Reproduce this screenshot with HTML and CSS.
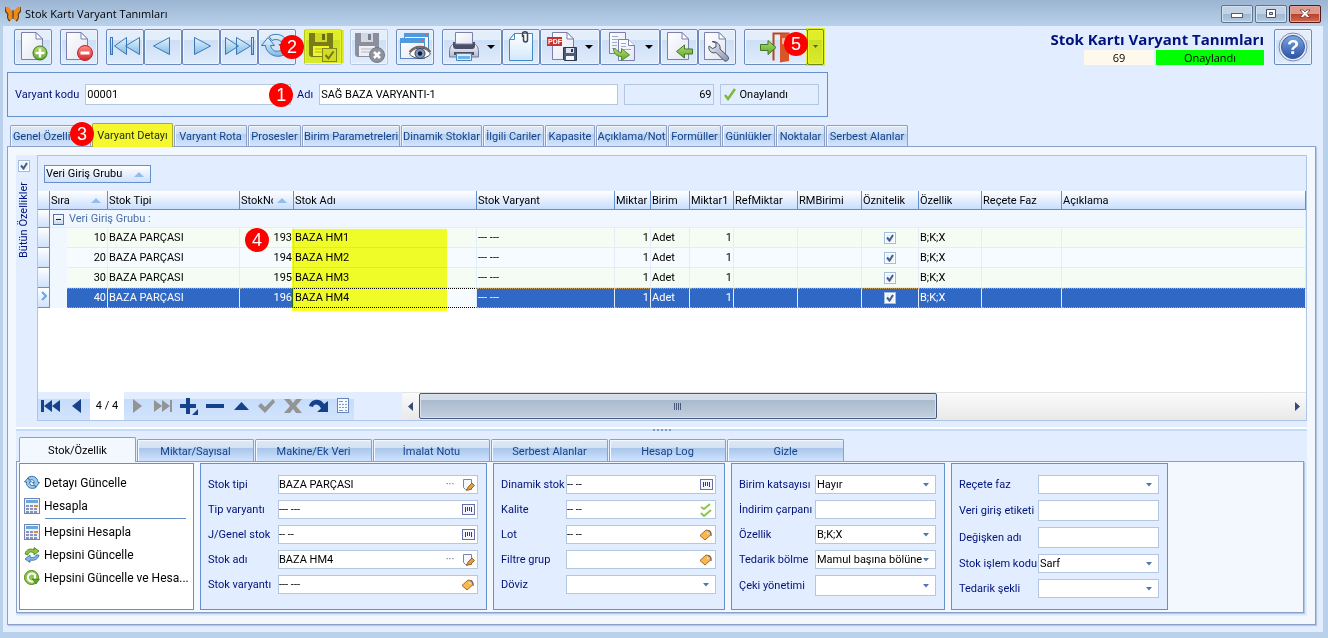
FILE: index.html
```html
<!DOCTYPE html>
<html lang="tr">
<head>
    <meta charset="UTF-8">
    <meta name="viewport" content="width=device-width, initial-scale=1.0">
    <title>Stok Kartı Varyant Tanımları</title>
    <link rel="stylesheet" href="styles.css">
</head>
<body>
    <!-- shared gradients and symbols -->
    <svg class="defs" width="0" height="0" aria-hidden="true">
        <defs>
            <linearGradient id="blue" x1="0" y1="0" x2="0" y2="1"><stop offset="0" stop-color="#e6f5fd"/><stop offset="1" stop-color="#7fbae6"/></linearGradient>
            <linearGradient id="paper" x1="0" y1="0" x2="1" y2="1"><stop offset="0" stop-color="#ffffff"/><stop offset="1" stop-color="#e3e6f2"/></linearGradient>
            <linearGradient id="sheet" x1="0" y1="0" x2="0" y2="1"><stop offset="0" stop-color="#ffffff"/><stop offset="1" stop-color="#d3e8fa"/></linearGradient>
            <linearGradient id="green" x1="0" y1="0" x2="0" y2="1"><stop offset="0" stop-color="#b5dc6c"/><stop offset="1" stop-color="#62a32c"/></linearGradient>
            <linearGradient id="red" x1="0" y1="0" x2="0" y2="1"><stop offset="0" stop-color="#ff8d86"/><stop offset="1" stop-color="#d42a2a"/></linearGradient>
            <linearGradient id="steel" x1="0" y1="0" x2="1" y2="1"><stop offset="0" stop-color="#eef0f8"/><stop offset="1" stop-color="#8990ad"/></linearGradient>
            <linearGradient id="body" x1="0" y1="0" x2="0" y2="1"><stop offset="0" stop-color="#f2f3f9"/><stop offset="1" stop-color="#b3b8cd"/></linearGradient>
            <linearGradient id="helpblue" x1="0" y1="0" x2="0" y2="1"><stop offset="0" stop-color="#7ba6e0"/><stop offset="1" stop-color="#2a54a8"/></linearGradient>
            <symbol id="page" viewBox="0 0 22 28"><path d="M.5.5H15l6.500 6.500V27.500H.5z" fill="url(#paper)" stroke="#7a7fae"/><path d="M15 .5V7h6.500z" fill="#fff" stroke="#7a7fae"/></symbol>
            <symbol id="barcode" viewBox="0 0 13 11"><rect x=".5" y=".5" width="12" height="10" fill="#f5f6fb" stroke="#6a6fa5"/><path d="M3.500 3v5M5.500 3v4M7.500 3v4M9.500 3v5" stroke="#3c3c55"/></symbol>
            <symbol id="edit" viewBox="0 0 13 14"><path d="M1.500 1.500h8v10h-6l-2-2z" fill="#f6f8fd" stroke="#7d83ad"/><path d="M4.500 12.500L6 9l4-4 2.500 2.500-4 4z" fill="#e39a3c" stroke="#8a5420" stroke-width=".8"/></symbol>
            <symbol id="tag" viewBox="0 0 14 12"><path d="M1 6.500L7 1l4 .8.8 4L6 11z" fill="#f7b84e" stroke="#a9672a"/><circle cx="9" cy="3.800" r="1" fill="#fff"/><path d="M9 3.500c2-3 4 1 3 3.500" fill="none" stroke="#5a5f80"/></symbol>
            <symbol id="checks" viewBox="0 0 12 14"><path d="M1 4l3 2 6-5M1 10l3 3 7-6" fill="none" stroke="#8cc84b" stroke-width="2"/></symbol>
            <symbol id="calc" viewBox="0 0 16 16"><rect x=".5" y=".5" width="15" height="15" fill="#eef2fa" stroke="#7384b4"/><path d="M2 2h12v3H2z" fill="#67a8df"/><path d="M2 7h3v2H2zM6 7h3v2H6zM2 10h3v2H2zM6 10h3v2H6zM10 10h3v2h-3zM2 13h3v2H2zM6 13h3v2H6zM10 13h3v2h-3z" fill="#8593bd"/><path d="M10 7h4v2h-4z" fill="#dd8b36"/></symbol>
        </defs>
    </svg>

    <header class="titlebar">
        <svg width="16" height="16" viewBox="0 0 16 16"><path d="M7.500 6C5 1 2 0 0 1c0 3 1 6 3 7-1 3 0 6 2 7 2-1 3-4 3-6 0 2 1 5 3 6 2-1 3-4 2-7 2-1 3-4 3-7-2-1-5 0-7.500 5z" fill="#f08a1c"/><path d="M8 4v9M0 1c0 3 1 6 3 7M16 1c0 3-1 6-3 7M5 15c-2-1-3-4-2-7M11 15c2-1 3-4 2-7" fill="none" stroke="#50391f" stroke-width="1.200"/></svg>
        <span class="caption">Stok Kartı Varyant Tanımları</span>
        <button class="winbtn" aria-label="Küçült"><svg width="12" height="12"><rect x=".5" y="5.500" width="11" height="4" fill="#fff" stroke="#555c6e"/></svg></button>
        <button class="winbtn" aria-label="Büyüt"><svg width="12" height="12"><path d="M1.500 1.500h9v8h-9z M4.500 4.500h3v2h-3z" fill="#fff" fill-rule="evenodd" stroke="#4a5064"/></svg></button>
        <button class="winbtn close" aria-label="Kapat"><svg width="12" height="12"><path d="M1 2h3l2 2 2-2h3L8 5.500 11 9.500H8l-2-2-2 2H1l3-4z" fill="#fff" stroke="#6b2020" stroke-width=".7"/></svg></button>
    </header>

    <main class="client">
        <div class="top">
            <div class="toolbar">
                <div class="group"><button class="tool" aria-label="Yeni"><svg width="32" height="32"><use href="#page" x="4" y="1" width="22" height="28"/><circle cx="23" cy="22" r="7" fill="url(#green)" stroke="#37761b"/><path d="M23 17.500v9M18.500 22h9" stroke="#fff" stroke-width="2.500"/></svg></button></div>
                <div class="group"><button class="tool" aria-label="Sil"><svg width="32" height="32"><use href="#page" x="3" y="1" width="22" height="28"/><circle cx="22" cy="22" r="7.500" fill="url(#red)" stroke="#c02228"/><path d="M17.500 22h9" stroke="#fff" stroke-width="3"/></svg></button></div>
                <div class="group">
                    <button class="tool" aria-label="İlk"><svg width="32" height="32" fill="url(#blue)" stroke="#3b77b5"><rect x="1.500" y="6.500" width="2" height="17"/><path d="M17.500 6.500v17L5.500 15zM30.500 6.500v17L16.500 15z"/></svg></button>
                    <button class="tool" aria-label="Önceki"><svg width="32" height="32" fill="url(#blue)" stroke="#3b77b5"><path d="M22.500 6.500v17L6.500 15z"/></svg></button>
                    <button class="tool" aria-label="Sonraki"><svg width="32" height="32" fill="url(#blue)" stroke="#3b77b5"><path d="M9.500 6.500v17L25.500 15z"/></svg></button>
                    <button class="tool" aria-label="Son"><svg width="32" height="32" fill="url(#blue)" stroke="#3b77b5"><path d="M2.500 6.500v17l13-8.500zM13.500 6.500v17L27.500 15z"/><rect x="28.500" y="6.500" width="2" height="17"/></svg></button>
                    <button class="tool" aria-label="Yenile"><svg width="32" height="32" fill="url(#blue)" stroke="#3b77b5"><path d="M.5 14.500L7 6.500l6.500 8h-4c1 4 4 6.500 8 5.500 2 0 4-1 5-2l3 4c-8 7-20 2-21-7.500z"/><path d="M8 5.500c7-5 18-1 19 8h4l-6.500 8-6.500-8h4c-2-5-7-6-11-4z"/></svg><span class="badge on-refresh">2</span></button>
                </div>
                <div class="group"><button class="tool disabled" aria-label="Kaydet ve onayla"><svg width="32" height="32"><path d="M2 2h24v24H4l-2-2z" fill="#7b7d8f"/><path d="M8 2h12v9H8z" fill="#d3d6e0"/><path d="M15 3h3v6h-3z" fill="#696c7e"/><path d="M6 15h16v10H6z" fill="#f6f6fa"/><path d="M8 18h12M8 21h12" stroke="#b2b5c2"/><rect x="15.500" y="17.500" width="14" height="13" fill="#d9dbe5" stroke="#85879a"/><path d="M18.500 24l3 3.500 5-7" fill="none" stroke="#73768a" stroke-width="2"/></svg><span class="marker over-save"></span></button></div>
                <div class="group"><button class="tool disabled" aria-label="Vazgeç"><svg width="32" height="32"><path d="M2 2h24v24H4l-2-2z" fill="#8b8f9d"/><path d="M8 2h12v9H8z" fill="#d3d7e0"/><path d="M15 3h3v6h-3z" fill="#7b7f8d"/><path d="M6 15h16v10H6z" fill="#eef0f4"/><path d="M8 18h12M8 21h12" stroke="#b2b6c2"/><circle cx="24" cy="24" r="7.500" fill="#8e929e" stroke="#777b88"/><path d="M21 21l6 6M27 21l-6 6" stroke="#fff" stroke-width="2.500"/></svg></button></div>
                <div class="group"><button class="tool" aria-label="Önizleme"><svg width="32" height="32"><rect x="5.500" y="2.500" width="24" height="18" fill="#f4f7fd" stroke="#4a86c8"/><path d="M5 2h25v4H5z" fill="#4f9ade"/><rect x="1.500" y="7.500" width="24" height="20" fill="url(#paper)" stroke="#5e86ba"/><path d="M1 7h25v5H1z" fill="#4f9ade"/><path d="M22 8h3v3h-3zM26 3h3v2h-3z" fill="#e8605a"/><path d="M10.500 23c5-8 16-8 21 0-5 6-16 6-21 0z" fill="#fff" stroke="#4c4a55"/><path d="M10.500 21c5-7 16-7 21 0" fill="none" stroke="#76685f" stroke-width="2"/><circle cx="21" cy="22.500" r="5" fill="#7a97bd" stroke="#30415f"/><circle cx="21" cy="22.500" r="2.200" fill="#111a2c"/></svg></button></div>
                <div class="group">
                    <button class="tool wide" aria-label="Yazdır"><svg width="32" height="32"><path d="M5 13.500C3 14 1.500 17 1.500 21v5h29v-5c0-4-1.500-7-3.500-7.500z" fill="url(#body)" stroke="#73789e"/><path d="M5 11h22v3c0 3-1 4-3 4H8c-2 0-3-1-3-4z" fill="#4a4f66"/><path d="M7.500 1.500h17V13h-17z" fill="url(#paper)" stroke="#7c81aa"/><path d="M6 21h20v3H6z" fill="#4a4f66"/><path d="M8.500 22.500h15v7h-15z" fill="#d7ecfb" stroke="#4988bf"/><path d="M10 25h12v3H10z" fill="#6fb4e6"/></svg><svg class="drop" width="9" height="5"><path d="M0 0h8L4 4z"/></svg></button>
                    <button class="tool" aria-label="Ekler"><svg width="32" height="32"><path d="M9.500 2.500h18v27h-23v-21z" fill="url(#sheet)" stroke="#4289c8"/><path d="M9.500 2.500v6h-5z" fill="#fff" stroke="#4289c8"/><path d="M18.500 4v5c0 2.500 4 2.500 4 0V3c0-3-5-3-5 0v3" fill="none" stroke="#3e455c" stroke-width="1.500"/></svg></button>
                    <button class="tool wide" aria-label="PDF kaydet"><svg width="32" height="32"><use href="#page" x="6" y="1" width="22" height="28"/><path d="M1 6h15v9H1z" fill="#c9302f"/><text x="2" y="13" class="pdf">PDF</text><path d="M17.500 16.500h13v13h-12l-1-1z" fill="#4d5a7b" stroke="#2f3750"/><path d="M20 17h8v5h-8z" fill="#dfe3ee"/><path d="M25 18h2v3h-2z" fill="#2f3750"/><path d="M20 25h8v4h-8z" fill="#f5f7fc"/></svg><svg class="drop" width="9" height="5"><path d="M0 0h8L4 4z"/></svg></button>
                    <button class="tool wide" aria-label="Kopyala"><svg width="32" height="32"><path d="M3.500 1.500h16v21h-16z" fill="url(#paper)" stroke="#7a7fae"/><path d="M6 5.500h6M6 8.500h6M6 11.500h5M6 14.500h5M6 17.500h4" stroke="#9da8cc"/><path d="M12.500 8.500h10l6 6v15h-16z" fill="url(#paper)" stroke="#7a7fae"/><path d="M22.500 8.500v6h6" fill="#fff" stroke="#7a7fae"/><path d="M15 12.500h5M15 15.500h5M15 18.500h10" stroke="#9da8cc"/><path d="M7.500 17.500c3 0 4 4 8 4v-4l8 6.500-8 5.500v-4c-5 0-8-3-8-8z" fill="url(#green)" stroke="#4d8c2a"/></svg><svg class="drop" width="9" height="5"><path d="M0 0h8L4 4z"/></svg></button>
                    <button class="tool" aria-label="İçe al"><svg width="32" height="32"><use href="#page" x="4" y="1" width="22" height="28"/><path d="M13.500 20.500l8-6.500v4h8v5h-8v4z" fill="url(#green)" stroke="#3d7a22"/></svg></button>
                    <button class="tool" aria-label="Ayarlar"><svg width="32" height="32"><use href="#page" x="3" y="1" width="22" height="28"/><path d="M11 10.500l4 1.500v4l-3.500 1.500L8 15c-1 5 3 8 7 6.500l8 8c2 2 6-1 4-4l-8-7.500c1-4-3-8-8-7.500z" fill="url(#steel)" stroke="#494f68"/></svg></button>
                </div>
                <div class="group"><button class="tool exit" aria-label="Çıkış"><svg width="32" height="32"><path d="M13.500 29.500v-27h16" fill="none" stroke="#bd431f" stroke-width="2"/><path d="M20 3l9-1v28l-9 1.500z" fill="#d9562b"/><path d="M22 7h5v6h-5z" fill="#f5b49a"/><path d="M.5 13.500H8V9.500l8 7-8 7v-4H.5z" fill="url(#green)" stroke="#3d7a22"/></svg></button><button class="tool split" aria-label="Çıkış seçenekleri"><svg width="6" height="4"><path d="M0 0h5L2.500 3z" fill="#4b6fa5"/></svg><span class="marker over-split"></span><span class="badge on-exit">5</span></button></div>
            </div>
            <div class="status">
                <h1>Stok Kartı Varyant Tanımları</h1>
                <div class="status-row"><span class="code">69</span><span class="approved">Onaylandı</span></div>
            </div>
            <button class="tool help" aria-label="Yardım"><svg width="32" height="32"><circle cx="16" cy="16" r="14" fill="#e7eaf5" stroke="#8189ad"/><circle cx="16" cy="16" r="11.500" fill="url(#helpblue)" stroke="#3a5c9e"/><text x="16" y="23" class="qmark">?</text></svg></button>
        </div>

        <div class="key-panel">
            <label for="kod">Varyant kodu</label>
            <input id="kod" class="kod" type="text" value="00001">
            <label for="ad" class="ad-label">Adı<span class="badge on-name">1</span></label>
            <input id="ad" class="ad" type="text" value="SAĞ BAZA VARYANTI-1">
            <input class="no" type="text" value="69" aria-label="No" readonly>
            <div class="state"><svg width="12" height="13"><path d="M1 7l3 4 7-10" fill="none" stroke="#7fb83e" stroke-width="2.500"/></svg>Onaylandı</div>
        </div>

        <nav class="tabs">
            <button>Genel Özellikler</button>
            <button class="active"><span class="badge on-tab">3</span>Varyant Detayı</button>
            <button>Varyant Rota</button>
            <button>Prosesler</button>
            <button>Birim Parametreleri</button>
            <button>Dinamik Stoklar</button>
            <button>İlgili Cariler</button>
            <button>Kapasite</button>
            <button>Açıklama/Not</button>
            <button>Formüller</button>
            <button>Günlükler</button>
            <button>Noktalar</button>
            <button>Serbest Alanlar</button>
        </nav>

        <section class="page">
            <div class="upper">
                <div class="side">
                    <input type="checkbox" id="tumu" checked>
                    <label for="tumu">Bütün Özellikler</label>
                </div>
                <div class="grid">
                    <div class="group-panel"><button class="chip">Veri Giriş Grubu <i class="sort"></i></button></div>
                    <table>
                        <colgroup>
                            <col class="c-ind"><col class="c-indent"><col class="c-sira"><col class="c-tip"><col class="c-no"><col class="c-ad"><col class="c-var"><col class="c-mik"><col class="c-bir"><col class="c-mik1"><col class="c-ref"><col class="c-ref"><col class="c-ozn"><col class="c-ozel"><col class="c-faz"><col>
                        </colgroup>
                        <thead>
                            <tr><th></th><th colspan="2">Sıra<i class="sort"></i></th><th>Stok Tipi</th><th><span class="cut">StokNo</span><i class="sort"></i></th><th>Stok Adı</th><th>Stok Varyant</th><th>Miktar</th><th>Birim</th><th>Miktar1</th><th>RefMiktar</th><th>RMBirimi</th><th>Öznitelik</th><th>Özellik</th><th>Reçete Faz</th><th>Açıklama</th></tr>
                        </thead>
                        <tbody>
                            <tr class="group-row"><td class="ind"></td><td colspan="15"><button class="collapse" aria-label="Daralt"></button>Veri Giriş Grubu :</td></tr>
                            <tr class="odd"><td class="ind"></td><td class="indent"></td><td class="num">10</td><td>BAZA PARÇASI</td><td class="num mark"><span class="badge on-row">4</span>193</td><td class="mark">BAZA HM1<span class="marker over-names"></span></td><td>--- ---</td><td class="num">1</td><td>Adet</td><td class="num">1</td><td></td><td></td><td class="chk"><input type="checkbox" aria-label="Öznitelik 10" checked></td><td>B;K;X</td><td></td><td></td></tr>
                            <tr><td class="ind"></td><td class="indent"></td><td class="num">20</td><td>BAZA PARÇASI</td><td class="num">194</td><td>BAZA HM2</td><td>--- ---</td><td class="num">1</td><td>Adet</td><td class="num">1</td><td></td><td></td><td class="chk"><input type="checkbox" aria-label="Öznitelik 20" checked></td><td>B;K;X</td><td></td><td></td></tr>
                            <tr class="odd"><td class="ind"></td><td class="indent"></td><td class="num">30</td><td>BAZA PARÇASI</td><td class="num">195</td><td>BAZA HM3</td><td>--- ---</td><td class="num">1</td><td>Adet</td><td class="num">1</td><td></td><td></td><td class="chk"><input type="checkbox" aria-label="Öznitelik 30" checked></td><td>B;K;X</td><td></td><td></td></tr>
                            <tr class="selected"><td class="ind"><svg width="6" height="10"><path d="M1 1l4 4-4 4" fill="none" stroke="#6aa5e6" stroke-width="2"/></svg></td><td class="indent"></td><td class="num">40</td><td>BAZA PARÇASI</td><td class="num">196</td><td class="focused">BAZA HM4</td><td>--- ---</td><td class="num">1</td><td>Adet</td><td class="num">1</td><td></td><td></td><td class="chk"><input type="checkbox" aria-label="Öznitelik 40" checked></td><td>B;K;X</td><td></td><td></td></tr>
                        </tbody>
                    </table>
                    <div class="grid-foot">
                        <div class="navigator">
                            <button aria-label="İlk kayıt"><svg width="20" height="14"><path d="M0 1h3v12H0zM11 1v12L3 7zM19 1v12l-8-6z"/></svg></button>
                            <button aria-label="Önceki kayıt"><svg width="20" height="14"><path d="M14 0v14L5 7z"/></svg></button>
                            <span class="pos">4 / 4</span>
                            <button class="off" aria-label="Sonraki kayıt"><svg width="20" height="14"><path d="M6 0v14l9-7z"/></svg></button>
                            <button class="off" aria-label="Son kayıt"><svg width="20" height="14"><path d="M1 1v12l8-6zM9 1v12l8-6zM17 1h2v12h-2z"/></svg></button>
                            <button aria-label="Ekle"><svg width="20" height="18"><path d="M7 1h4v6h6v4h-6v6H7v-6H1V7h6zM19 12v6h-6z"/></svg></button>
                            <button aria-label="Çıkar"><svg width="20" height="14"><path d="M1 5h18v4H1z"/></svg></button>
                            <button aria-label="Düzenle"><svg width="20" height="14"><path d="M3 11h15L10.500 3z"/></svg></button>
                            <button class="off" aria-label="Onayla"><svg width="20" height="14"><path d="M1 7l3-3 4 4L16 0l2 3L8 14z"/></svg></button>
                            <button class="off" aria-label="İptal"><svg width="20" height="14"><path d="M1 0h6l3 4 3-4h6l-6 7 6 7h-6l-3-4-3 4H1l6-7z"/></svg></button>
                            <button aria-label="Tazele"><svg width="20" height="14"><path d="M0 7C2-1 12-1 15 5l4-3v11H8l4-3.500C10 5 5 4 4 8z"/></svg></button>
                            <button class="last" aria-label="Liste"><svg width="12" height="16"><rect x=".5" y=".5" width="11" height="14" fill="#f4f8ff" stroke="#6684b8"/><path d="M2 3.500h4M8 3.500h2M2 6.500h2M5 6.500h2M8 6.500h2M2 9.500h2M5 9.500h2M8 9.500h2M2 12.500h4M8 12.500h2" stroke="#7d99c9"/></svg></button>
                        </div>
                        <div class="scroll">
                            <button aria-label="Sola kaydır"><svg width="6" height="10"><path d="M5 0v9L0 4.500z" fill="#394a72"/></svg></button>
                            <div class="track"><div class="thumb"><i></i><i></i><i></i><i></i></div></div>
                            <button aria-label="Sağa kaydır"><svg width="6" height="10"><path d="M0 0v9l5-4.500z" fill="#394a72"/></svg></button>
                        </div>
                    </div>
                </div>
            </div>

            <div class="splitter"><i></i><i></i><i></i><i></i><i></i></div>

            <div class="detail">
                <nav class="detail-tabs">
                    <button class="active">Stok/Özellik</button>
                    <button>Miktar/Sayısal</button>
                    <button>Makine/Ek Veri</button>
                    <button>İmalat Notu</button>
                    <button>Serbest Alanlar</button>
                    <button>Hesap Log</button>
                    <button>Gizle</button>
                </nav>
                <div class="detail-page">
                    <div class="box actions">
                        <a href="#"><svg width="16" height="16" fill="#9cc9ee" stroke="#3c73a8"><path d="M.5 7L4 3l3.500 4H5.500c0 3 2 4 5 3.500l1.500 2C7 15 2 12 2.500 7z"/><path d="M4 2.500c5-3 10 0 10 5h1.500L12 12 8.500 7.500h2c-1-3-3-3-5-2.500z"/></svg>Detayı Güncelle</a>
                        <a href="#"><svg width="16" height="16"><use href="#calc"/></svg>Hesapla</a>
                        <hr>
                        <a href="#"><svg width="16" height="16"><use href="#calc"/></svg>Hepsini Hesapla</a>
                        <a href="#"><svg width="16" height="16"><path d="M1 7c1-5 6-6 9-4V.5L15 4l-5 4V6C7 4 4 5 4 8z" fill="#8cc63f" stroke="#437a1e" stroke-width=".8"/><path d="M15 8c-1 5-6 6-9 5v2.500L1 12l5-4v2c3 1 6 0 6-2z" fill="#7fb7e8" stroke="#34699c" stroke-width=".8"/></svg>Hepsini Güncelle</a>
                        <a href="#"><svg width="16" height="16"><circle cx="7.500" cy="7.500" r="7" fill="#93c94a" stroke="#4b8423"/><path d="M11 10a4 4 0 1 1 0-5v4" fill="none" stroke="#fff" stroke-width="2"/><path d="M8 9h7.500L12 14z" fill="#5ea428" stroke="#35701a" stroke-width=".6"/></svg>Hepsini Güncelle ve Hesa...</a>
                    </div>

                    <div class="box form f-stok">
                        <label for="tip">Stok tipi</label>
                        <div class="field"><input id="tip" type="text" value="BAZA PARÇASI"><button class="dots" aria-label="Seç">···</button><button aria-label="Düzenle"><svg width="13" height="14"><use href="#edit"/></svg></button></div>
                        <label for="tipv">Tip varyantı</label>
                        <div class="field"><input id="tipv" type="text" value="--- ---"><button aria-label="Seç"><svg width="13" height="11"><use href="#barcode"/></svg></button></div>
                        <label for="genel">J/Genel stok</label>
                        <div class="field"><input id="genel" type="text" value="-- --"><button aria-label="Seç"><svg width="13" height="11"><use href="#barcode"/></svg></button></div>
                        <label for="sadi">Stok adı</label>
                        <div class="field"><input id="sadi" type="text" value="BAZA HM4"><button class="dots" aria-label="Seç">···</button><button aria-label="Düzenle"><svg width="13" height="14"><use href="#edit"/></svg></button></div>
                        <label for="svar">Stok varyantı</label>
                        <div class="field"><input id="svar" type="text" value="--- ---"><button aria-label="Seç"><svg width="14" height="12"><use href="#tag"/></svg></button></div>
                    </div>

                    <div class="box form f-dinamik">
                        <label for="din">Dinamik stok</label>
                        <div class="field"><input id="din" type="text" value="-- --"><button aria-label="Seç"><svg width="13" height="11"><use href="#barcode"/></svg></button></div>
                        <label for="kal">Kalite</label>
                        <div class="field"><input id="kal" type="text" value="-- --"><button aria-label="Seç"><svg width="12" height="14"><use href="#checks"/></svg></button></div>
                        <label for="lot">Lot</label>
                        <div class="field"><input id="lot" type="text" value="-- --"><button aria-label="Seç"><svg width="14" height="12"><use href="#tag"/></svg></button></div>
                        <label for="filtre">Filtre grup</label>
                        <div class="field"><input id="filtre" type="text"><button aria-label="Seç"><svg width="14" height="12"><use href="#tag"/></svg></button></div>
                        <label for="doviz">Döviz</label>
                        <select id="doviz"><option></option></select>
                    </div>

                    <div class="box form f-birim">
                        <label for="kats">Birim katsayısı</label>
                        <select id="kats"><option>Hayır</option></select>
                        <label for="ind">İndirim çarpanı</label>
                        <input id="ind" type="text">
                        <label for="ozel">Özellik</label>
                        <select id="ozel"><option>B;K;X</option></select>
                        <label for="ted">Tedarik bölme</label>
                        <select id="ted"><option>Mamul başına bölüne</option></select>
                        <label for="ceki">Çeki yönetimi</label>
                        <select id="ceki" class="tall"><option></option></select>
                    </div>

                    <div class="box form f-recete">
                        <label for="faz">Reçete faz</label>
                        <select id="faz"><option></option></select>
                        <label for="etiket">Veri giriş etiketi</label>
                        <input id="etiket" class="tall" type="text">
                        <label for="deg">Değişken adı</label>
                        <input id="deg" class="tall" type="text">
                        <label for="islem">Stok işlem kodu</label>
                        <select id="islem"><option>Sarf</option></select>
                        <label for="sekil">Tedarik şekli</label>
                        <select id="sekil"><option></option></select>
                    </div>
                </div>
            </div>
        </section>
    </main>
</body>
</html>
```
FILE: styles.css
```css
* {
    box-sizing: border-box;
}
body {
    margin: 0;
    min-height: 100vh;
    display: flex;
    flex-direction: column;
    background: #b9d1ea;
    font-family: Roboto, sans-serif;
    font-size: 11px;
    line-height: 14px;
    color: #000;
}
button, input, select {
    font: inherit;
    color: inherit;
    margin: 0;
    padding: 0;
}
button {
    border: none;
    background: none;
}
svg {
    flex-shrink: 0;
}
.defs {
    position: absolute;
}

/* title bar */
.titlebar {
    display: flex;
    align-items: center;
    gap: 2px;
    height: 26px;
    padding: 2px 7px 0 5px;
    background: linear-gradient(#9ab4d2, #b9d1ea);
}
.caption {
    flex: 1;
    padding-left: 2px;
    font-family: "Open Sans", sans-serif;
}
.winbtn {
    display: grid;
    place-items: center;
    width: 32px;
    height: 18px;
    border: 1px solid #5d7491;
    border-radius: 2px;
    box-shadow: inset 0 0 0 1px #d5e2f0;
    background: linear-gradient(#c3d3e6 50%, #9fb7d2 50%, #b5cbe2);
}
.winbtn.close {
    border-color: #56171c;
    box-shadow: inset 0 0 0 1px #e2a79c;
    background: linear-gradient(#dd9a8c 50%, #b8412c 50%, #cf6a50);
}

.client {
    flex: 1;
    display: flex;
    flex-direction: column;
    margin: 0 5px 6px 3px;
    padding: 3px 7px 7px 4px;
    background: #e2eeff;
}

/* toolbar */
.top {
    display: flex;
    padding: 0 4px 7px 7px;
}
.toolbar {
    display: flex;
    gap: 8px;
    flex: 1;
}
.group {
    display: flex;
}
.tool {
    position: relative;
    display: flex;
    align-items: center;
    justify-content: center;
    width: 38px;
    height: 36px;
    border: 1px solid #6b8cba;
    border-radius: 2px;
    box-shadow: inset 0 0 0 1px #eef5ff;
    background: linear-gradient(#e4eefb 30%, #cddff5 30%, #e0ecfc);
}
.tool.wide {
    width: 60px;
    gap: 7px;
}
.tool.disabled {
    border-color: #b5c8e2;
}
.tool.exit {
    width: 64px;
}
.tool.split {
    width: 17px;
    margin-left: -1px;
}
.pdf {
    font: bold 7px "Liberation Sans", sans-serif;
    fill: #fff;
}
.qmark {
    font: bold 20px "Liberation Sans", sans-serif;
    fill: #fff;
    text-anchor: middle;
}
.status {
    width: 214px;
    margin-right: 10px;
    text-align: right;
    font-family: "Open Sans", sans-serif;
}
.status h1 {
    margin: 0;
    font-size: 15px;
    line-height: 21px;
    color: #00137c;
    white-space: nowrap;
}
.status-row {
    display: flex;
    justify-content: flex-end;
    gap: 2px;
    text-align: center;
    line-height: 15px;
}
.status-row .code {
    width: 70px;
    background: #fff9ec;
}
.status-row .approved {
    width: 108px;
    background: #00ff00;
}

/* numbered badges and highlighter marks */
.badge {
    position: absolute;
    z-index: 2;
    width: 24px;
    height: 24px;
    border-radius: 50%;
    background: #fd0000;
    color: #fff;
    font: 18px/24px "Liberation Sans", sans-serif;
    text-align: center;
}
.on-refresh { left: 21px; top: 5px; }
.on-exit { left: -24px; top: 2px; }
.on-name { right: 20px; top: -5px; }
.on-tab { left: -23px; top: -2px; }
.on-row { left: 5px; top: 0; }
.marker {
    position: absolute;
    z-index: 1;
    background: #faff28;
    mix-blend-mode: multiply;
}
.over-save { inset: 0 -3px 1px -1px; }
.over-split { inset: -2px -2px -2px -2px; }
.over-names { left: -2px; top: 1px; width: 155px; height: 82px; }

/* key fields */
.key-panel {
    display: flex;
    align-items: center;
    align-self: flex-start;
    width: 821px;
    height: 45px;
    padding: 0 8px 0 7px;
    border: 1px solid #6590cb;
    color: #00117a;
    gap: 6px;
}
.key-panel input, .state {
    height: 21px;
    padding: 0 1px;
    border: 1px solid #b3c7e3;
    background: #fff;
    color: #000;
}
.key-panel label {
    position: relative;
    white-space: nowrap;
    flex: 1;
}
.key-panel .ad-label {
    flex: none;
}
.key-panel .kod { width: 207px; }
.key-panel .ad { width: 300px; }
.key-panel .no {
    width: 90px;
    text-align: right;
    background: #e2eeff;
}
.state {
    display: flex;
    align-items: center;
    gap: 4px;
    width: 100px;
}
.key-panel .state {
    padding-left: 3px;
    background: #e2eeff;
}

/* main tabs */
.tabs {
    display: grid;
    grid-template-columns: 82px 82px 74px 54px 99px 82px 62px 51px 72px 54px 54px 50px 83px;
    align-items: end;
    height: 29px;
    padding-left: 3px;
}
.tabs button {
    height: 21px;
    border: 1px solid #8c9fc8;
    border-bottom: none;
    border-radius: 2px 2px 0 0;
    box-shadow: inset 1px 1px 0 #f4f8ff;
    margin-right: 1px;
    padding-top: 2px;
    background: linear-gradient(#e0e9f5, #d3e1f3 40%, #b4ceef 40%, #d2e5ff);
    color: #15428b;
    white-space: nowrap;
}
.tabs button.active {
    position: relative;
    height: 24px;
    margin-bottom: -1px;
    background: #f5f72f;
    border-color: #a9ab2c;
    box-shadow: none;
    padding: 0;
    color: #1f2b10;
}

.page {
    flex: 1;
    display: flex;
    flex-direction: column;
    padding: 8px;
    border: 1px solid #8c9fc8;
    box-shadow: 1px 1px 1px #b5c6e2;
    background: #f3f8ff;
}
.upper {
    flex: 1;
    display: flex;
}
.side {
    display: flex;
    flex-direction: column;
    align-items: center;
    gap: 10px;
    width: 21px;
    padding: 5px 6px 0 0;
    background: #e2eeff;
    color: #00117a;
}
.side label {
    writing-mode: vertical-rl;
    transform: rotate(180deg);
    white-space: nowrap;
}
input[type="checkbox"] {
    appearance: none;
    display: block;
    width: 12px;
    height: 12px;
    border: 1px solid #a4bcdb;
    background: #eef3fa;
    box-shadow: inset 0 0 0 1px #fff;
}
input[type="checkbox"]:checked {
    background: #eef3fa url("data:image/svg+xml,%3Csvg xmlns='http://www.w3.org/2000/svg' width='10' height='10'%3E%3Cpath d='M2 4.500L4.500 7.500L8 2' fill='none' stroke='%233f618f' stroke-width='2'/%3E%3C/svg%3E");
}

/* grid */
.grid {
    flex: 1;
    min-width: 0;
    display: flex;
    flex-direction: column;
    border: 1px solid #b0c4e4;
    background: #fff;
}
.group-panel {
    height: 35px;
    padding: 9px 6px 0;
    background: #e2eeff;
}
.chip {
    display: flex;
    align-items: center;
    justify-content: space-between;
    width: 107px;
    height: 18px;
    padding: 0 6px 0 1px;
    border: 1px solid #6590cb;
    background: linear-gradient(#fff, #cfe1fb);
}
.sort {
    border: 5px solid transparent;
    border-top: none;
    border-bottom-color: #92bdf0;
}
table {
    width: 100%;
    table-layout: fixed;
    border-collapse: separate;
    border-spacing: 0;
}
.c-ind { width: 12px; }
.c-indent { width: 17px; }
.c-sira { width: 41px; }
.c-tip { width: 132px; }
.c-no { width: 54px; }
.c-ad { width: 183px; }
.c-var { width: 138px; }
.c-mik { width: 36px; }
.c-bir { width: 39px; }
.c-mik1 { width: 44px; }
.c-ref { width: 64px; }
.c-ozn { width: 57px; }
.c-ozel { width: 63px; }
.c-faz { width: 80px; }
th, td {
    padding: 1px 1px 0;
    white-space: nowrap;
    text-align: left;
    font-weight: normal;
    border-right: 1px solid #e2edfb;
    border-bottom: 1px solid #e2edfb;
}
th {
    height: 19px;
    overflow: hidden;
    border-color: #6590cb;
    background: linear-gradient(#fff, #c8defd);
}
th .sort {
    float: right;
    margin: 4px 5px 0 0;
}
th .cut {
    display: inline-block;
    width: 32px;
    overflow: hidden;
    vertical-align: top;
}
td {
    height: 20px;
    background: #f5fbff;
}
.odd td { background: #f4fcf4; }
.group-row td {
    height: 18px;
    background: #f0f7ff;
    color: #4a6fa8;
}
td.num { text-align: right; }
td.mark { position: relative; }
td.chk { padding-left: 22px; }
td.ind {
    padding: 0 3px;
    border-color: #6590cb;
    background: linear-gradient(#fff, #cfe1fb);
}
td.indent {
    border: none;
    background: #f0f7ff;
}
.selected td {
    padding-top: 0;
    background: #2f69c5;
    color: #fff;
    border-top: 1px dotted #c79f5a;
    border-bottom: 1px dotted #c79f5a;
}
.selected td.ind {
    border-top: none;
    border-bottom: 1px solid #6590cb;
    background: linear-gradient(#fff, #cfe1fb);
}
.selected td.indent {
    border: none;
    background: #f0f7ff;
}
.selected td.focused {
    background: #f5fbff;
    color: #000;
    border-top-color: #000;
    border-bottom-color: #000;
}
.collapse {
    display: inline-grid;
    place-items: center;
    width: 11px;
    height: 11px;
    margin: 0 5px 0 2px;
    vertical-align: middle;
    border: 1px solid #5673a5;
    background: linear-gradient(#fff, #cbd9ee);
}
.collapse::before {
    content: "";
    width: 5px;
    height: 1px;
    background: #222;
}

/* navigator and scroll bar */
.grid-foot {
    display: flex;
    height: 28px;
    margin-top: auto;
    background: #e2eeff;
}
.navigator {
    display: flex;
    width: 364px;
    fill: #15428b;
}
.navigator button {
    display: grid;
    place-items: center;
    width: 26px;
    background: linear-gradient(#e2eeff 25%, #c5dcfb 25%, #d2e4fd);
}
.navigator .off { fill: #949494; }
.navigator .last { width: 22px; }
.pos {
    width: 34px;
    line-height: 28px;
    text-align: center;
    background: #fff;
}
.scroll {
    flex: 1;
    display: flex;
    background: linear-gradient(#fafafa, #e9e9e9);
    border-top: 1px solid #e3e3e3;
}
.scroll button {
    display: grid;
    place-items: center;
    width: 17px;
}
.track {
    flex: 1;
}
.thumb {
    display: flex;
    align-items: center;
    justify-content: center;
    gap: 1px;
    width: 59.5%;
    height: 26px;
    border: 1px solid #47597d;
    border-radius: 2px;
    box-shadow: inset 0 0 0 1px #d9e3ee;
    background: linear-gradient(#d3dce7 25%, #a9bacd 25%, #c3d0de);
}
.thumb i {
    width: 1px;
    height: 7px;
    background: #48597c;
}

.splitter {
    display: flex;
    align-items: flex-end;
    justify-content: center;
    gap: 2px;
    height: 10px;
    background: linear-gradient(#e2eeff 6px, #fff 6px, #fff 8px, #c3dcfb 8px);
}
.splitter i {
    width: 2px;
    height: 2px;
    background: #7f9dc9;
}

/* detail */
.detail {
    padding: 6px 3px 3px 0;
    background: #e2eeff;
}
.detail-tabs {
    display: flex;
    align-items: flex-end;
    gap: 1px;
    height: 24px;
    padding-left: 3px;
}
.detail-tabs button {
    width: 117px;
    height: 22px;
    padding-top: 2px;
    border: 1px solid #8c9fc8;
    border-bottom: none;
    border-radius: 2px 2px 0 0;
    box-shadow: inset 1px 1px 0 #f4f8ff;
    background: linear-gradient(#e0e9f5, #d3e1f3 40%, #a9c6ea 40%, #cfe3ff);
    color: #15428b;
}
.detail-tabs button.active {
    height: 25px;
    margin-bottom: -1px;
    background: #f3f8ff;
    color: #000;
}
.detail-page {
    display: flex;
    gap: 6px;
    padding: 1px 2px 2px;
    border: 1px solid #8c9fc8;
    box-shadow: 1px 1px 1px #b5c6e2;
    background: #f3f8ff;
}
.box {
    border: 1px solid #6590cb;
    background: #e2eeff;
}
.actions {
    width: 175px;
    padding: 7px 7px 0 4px;
    background: #fff;
    font-size: 12px;
}
.actions a {
    display: flex;
    align-items: center;
    gap: 4px;
    height: 23px;
    color: #000;
    text-decoration: none;
    white-space: nowrap;
}
.actions hr {
    margin: 1px 0 1px 21px;
    border: none;
    border-top: 1px solid #6590cb;
}
.form {
    display: grid;
    align-content: start;
    row-gap: 6px;
    padding: 11px 8px 11px 7px;
    color: #00117a;
}
.f-stok { grid-template-columns: 70px 1fr; width: 287px; }
.f-dinamik { grid-template-columns: 65px 1fr; width: 232px; }
.f-birim { grid-template-columns: 76px 1fr; width: 214px; }
.f-recete { grid-template-columns: 79px 1fr; width: 217px; }
.form label {
    align-self: center;
    white-space: nowrap;
}
.field, .form > input, .form > select {
    min-width: 0;
    width: 100%;
    height: 19px;
    border: 1px solid #b3c7e3;
    border-radius: 0;
    background: #fff;
    color: #000;
}
.form > .tall {
    height: 21px;
}
.field {
    display: flex;
    align-items: center;
}
.field input {
    flex: 1;
    min-width: 0;
    border: none;
    padding: 0;
    background: none;
}
.field button {
    display: grid;
    place-items: center;
    width: 18px;
}
.field .dots {
    color: #3f618f;
}
.form > select {
    appearance: none;
    padding: 0 12px 0 1px;
    background: #fff url("data:image/svg+xml,%3Csvg xmlns='http://www.w3.org/2000/svg' width='6' height='4'%3E%3Cpath d='M0 0h6L3 3.500z' fill='%234f76ad'/%3E%3C/svg%3E") no-repeat right 6px center;
}
```
